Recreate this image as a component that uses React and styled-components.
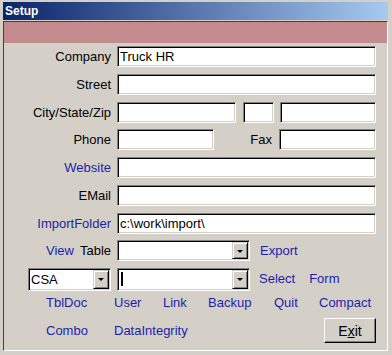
import React from "react";
import styled, { createGlobalStyle } from "styled-components";

const GlobalStyle = createGlobalStyle`
  html, body {
    margin: 0;
    padding: 0;
    background: #d4d0c8;
  }
  body {
    font-family: "Liberation Sans", Arial, sans-serif;
  }
`;

export default function App() {
  const linksTop = ["TblDoc", "User", "Link", "Backup", "Quit", "Compact"];

  return (
    <>
      <GlobalStyle />
      <Window>
        <TitleBar>Setup</TitleBar>
        <Client>
          <Band />
          <Form>
            <Label>Company</Label>
            <Field>Truck HR</Field>

            <Label>Street</Label>
            <Field />

            <Label>City/State/Zip</Label>
            <FieldGroup>
              <Field $width="119px" />
              <Field $width="31px" />
              <Field />
            </FieldGroup>

            <Label>Phone</Label>
            <FieldGroup $gap="0">
              <Field $width="97px" />
              <InlineLabel>Fax</InlineLabel>
              <Field $width="97px" />
            </FieldGroup>

            <Label $link>Website</Label>
            <Field />

            <Label>EMail</Label>
            <Field />

            <Label $link>ImportFolder</Label>
            <Field>c:\work\import\</Field>

            <LeftCell $split>
              <LinkText>View</LinkText>
              <Label>Table</Label>
            </LeftCell>
            <FieldGroup $gap="10px">
              <Combo $width="133px">
                <DropButton />
              </Combo>
              <LinkText>Export</LinkText>
            </FieldGroup>

            <LeftCell>
              <Combo $width="83px" $tall>
                CSA
                <DropButton />
              </Combo>
            </LeftCell>
            <FieldGroup $gap="9px">
              <Combo $width="133px" $tall>
                <Caret />
                <DropButton />
              </Combo>
              <LinkText>Select</LinkText>
              <LinkText $indent="5px">Form</LinkText>
            </FieldGroup>
          </Form>

          <Links>
            {linksTop.map((name) => (
              <LinkText key={name}>{name}</LinkText>
            ))}
            <LinkText>Combo</LinkText>
            <LinkText $span>DataIntegrity</LinkText>
            <ExitButton>
              E<u>x</u>it
            </ExitButton>
          </Links>
        </Client>
      </Window>
    </>
  );
}

const Window = styled.div`
  width: 392px;
  height: 355px;
  box-sizing: border-box;
  padding: 2px 4px 4px 3px;
  display: flex;
  flex-direction: column;
  background: #d4d0c8;
  font-family: "Liberation Sans", Arial, sans-serif;
`;

const TitleBar = styled.div`
  height: 18px;
  flex-shrink: 0;
  display: flex;
  align-items: center;
  padding-left: 2px;
  background: linear-gradient(to right, #0a246a, #a6caf0);
  color: #fff;
  font-weight: bold;
  font-size: 12px;
`;

const Client = styled.div`
  flex: 1;
  margin-top: 1px;
  display: flex;
  flex-direction: column;
  border: 1px solid;
  border-color: #404040 #fff #fff #404040;
`;

const Band = styled.div`
  height: 21px;
  background: #c38b8d;
`;

const Form = styled.div`
  display: grid;
  grid-template-columns: 107px 1fr;
  grid-auto-rows: 21px;
  column-gap: 6px;
  row-gap: 6.75px;
  padding: 3px 11px 0 0;
`;

const Label = styled.div`
  align-self: center;
  text-align: right;
  font-size: 13px;
  line-height: 15px;
  color: ${(p) => (p.$link ? "#1e1ea8" : "#000")};
  white-space: nowrap;
`;

const InlineLabel = styled(Label)`
  flex: 1;
  padding-right: 7px;
`;

const LinkText = styled.div`
  align-self: center;
  font-size: 13px;
  line-height: 15px;
  color: #1e1ea8;
  white-space: nowrap;
  margin-left: ${(p) => p.$indent || "0"};
  grid-column: ${(p) => (p.$span ? "span 4" : "auto")};
`;

const Field = styled.div`
  box-sizing: border-box;
  height: 21px;
  width: ${(p) => p.$width || "auto"};
  flex: ${(p) => (p.$width ? "none" : "1")};
  display: flex;
  align-items: center;
  padding-left: 2px;
  background: #fff;
  border: 1px solid;
  border-color: #808080 #fff #fff #808080;
  box-shadow: inset 1px 1px 0 #000, inset -1px -1px 0 #d4d0c8;
  font-size: 13px;
  color: #000;
  white-space: nowrap;
  overflow: hidden;
`;

const FieldGroup = styled.div`
  display: flex;
  align-items: center;
  gap: ${(p) => p.$gap || "6.5px"};
`;

const LeftCell = styled.div`
  display: flex;
  align-items: center;
  justify-content: ${(p) => (p.$split ? "space-between" : "flex-end")};
  padding-left: ${(p) => (p.$split ? "42px" : "0")};
`;

const Combo = styled(Field)`
  position: relative;
  height: ${(p) => (p.$tall ? "23px" : "21px")};
  margin-top: ${(p) => (p.$tall ? "1px" : "0")};
`;

const DropButton = styled.div`
  position: absolute;
  top: 1px;
  right: 1px;
  bottom: 1px;
  width: 16px;
  box-sizing: border-box;
  background: #d4d0c8;
  border: 1px solid;
  border-color: #d4d0c8 #000 #000 #d4d0c8;
  box-shadow: inset 1px 1px 0 #fff, inset -1px -1px 0 #808080;

  &::after {
    content: "";
    position: absolute;
    left: 50%;
    top: 50%;
    margin: -1px 0 0 -3px;
    border-left: 3px solid transparent;
    border-right: 3px solid transparent;
    border-top: 3px solid #000;
  }
`;

const Caret = styled.span`
  display: block;
  width: 2px;
  height: 14px;
  background: #000;
  margin-left: 1px;
`;

const Links = styled.div`
  display: grid;
  grid-template-columns: 68px 49px 45px 66px 45px 1fr;
  grid-template-rows: 15px 25px;
  row-gap: 8px;
  margin-top: 6px;
  padding: 0 11px 0 42px;
`;

const ExitButton = styled.div`
  grid-column: 6;
  justify-self: end;
  width: 52px;
  height: 25px;
  box-sizing: border-box;
  display: flex;
  align-items: center;
  justify-content: center;
  background: #d4d0c8;
  border: 1px solid;
  border-color: #fff #000 #000 #fff;
  box-shadow: inset -1px -1px 0 #808080;
  font-size: 14px;
  color: #000;

  u {
    text-decoration: underline;
  }
`;
